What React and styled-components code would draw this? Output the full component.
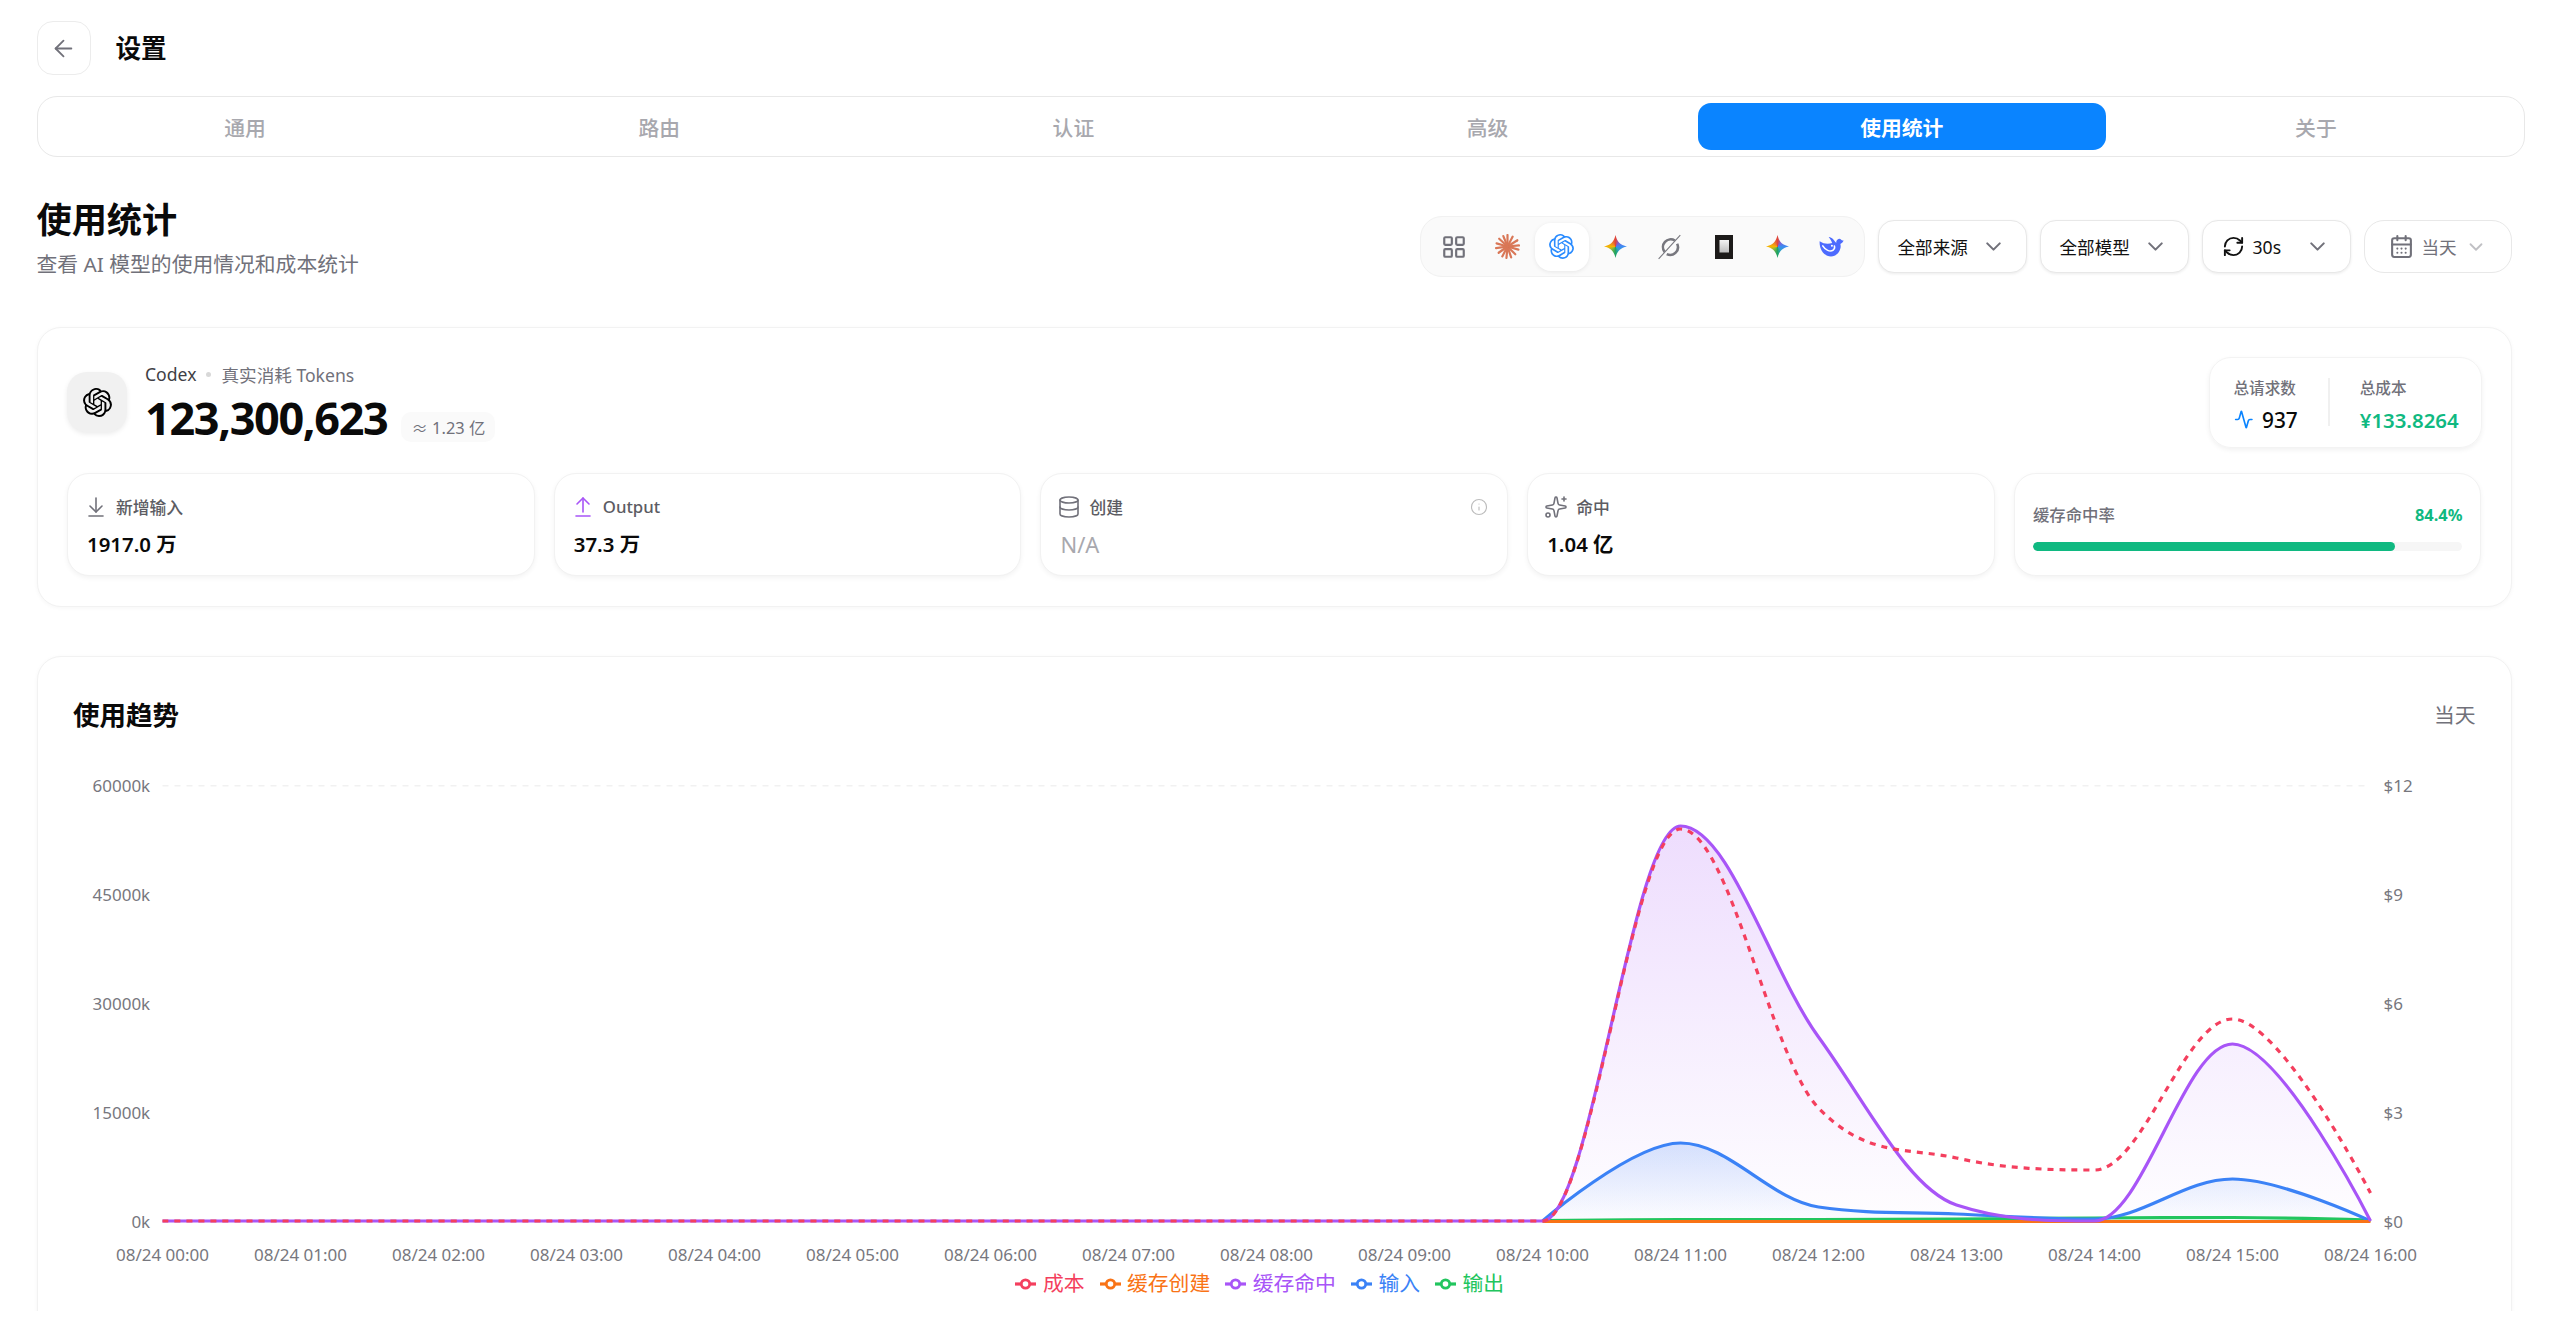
import React from 'react';
import styled, { createGlobalStyle } from 'styled-components';
import {
  ArrowLeft, LayoutGrid, ChevronDown, RefreshCw, CalendarDays, Activity,
  ArrowDownToLine, ArrowUpFromLine, Database, Sparkles, Info,
} from 'lucide-react';
import { SiOpenai } from 'react-icons/si';

const Global = createGlobalStyle`
  html, body { margin: 0; padding: 0; background: #fff; }
  body { font-family: "Noto Sans", "Noto Sans CJK SC", sans-serif; color: #0a0a0a; }
  * { box-sizing: border-box; }
`;

const Page = styled.div`
  width: 2560px;
  height: 1311px;
  overflow: hidden;
  padding: 21px 35px 0 36.5px;
`;
const TopBar = styled.header`
  display: flex;
  align-items: center;
  gap: 25px;
  height: 54px;
  margin-bottom: 21px;
`;
const BackButton = styled.button`
  width: 54px;
  height: 54px;
  display: flex;
  align-items: center;
  justify-content: center;
  padding: 0;
  background: #fff;
  border: 1.5px solid #ececec;
  border-radius: 16px;
  color: #71717a;
`;
const PageTitle = styled.h1`
  margin: 0;
  padding-top: 2px;
  font-size: 25.6px;
  font-weight: 600;
  line-height: 52px;
`;
const Tabs = styled.nav`
  display: grid;
  grid-template-columns: repeat(6, 1fr);
  gap: 6px;
  height: 61px;
  padding: 6px 4px 6px 3.5px;
  border: 1.5px solid #e8e8e8;
  border-radius: 20px;
`;
const Tab = styled.div`
  display: flex;
  align-items: center;
  justify-content: center;
  font-size: 20.8px;
  font-weight: ${p => (p.$active ? 600 : 500)};
  color: ${p => (p.$active ? '#fff' : '#a8a8ae')};
  background: ${p => (p.$active ? '#0a84ff' : 'transparent')};
  border-radius: 13px;
`;
const Content = styled.main`
  padding-right: 13px;
`;
const SectionHead = styled.section`
  display: flex;
  justify-content: space-between;
  align-items: flex-start;
  margin-top: 39.5px;
  height: 82px;
  margin-bottom: 48.5px;
`;
const HeadText = styled.div`
  display: flex;
  flex-direction: column;
  gap: 8px;
`;
const Heading = styled.h2`
  margin: 0;
  font-size: 35.2px;
  line-height: 44px;
  font-weight: 700;
`;
const SubHeading = styled.p`
  margin: 0;
  font-size: 20.8px;
  line-height: 30px;
  color: #71717a;
`;
const Toolbar = styled.div`
  display: flex;
  align-items: center;
  gap: 12.5px;
  padding-top: 19.5px;
`;
const IconGroup = styled.div`
  display: flex;
  height: 61px;
  padding: 5.5px;
  background: #fafafa;
  border: 1.5px solid #f1f1f1;
  border-radius: 22px;
`;
const IconTab = styled.div`
  width: 54px;
  height: 48px;
  display: flex;
  align-items: center;
  justify-content: center;
  color: #71717a;
  border-radius: 16px;
  background: ${p => (p.$active ? '#fff' : 'transparent')};
  box-shadow: ${p => (p.$active ? '0 1px 4px rgba(0,0,0,.08)' : 'none')};
`;
const GeminiStar = styled.span`
  display: block;
  width: 23px;
  height: 23px;
  background: conic-gradient(#e0453a 0deg, #7a62d8 40deg, #3d8bf2 90deg, #2f9fd0 140deg, #1fa463 180deg, #8fb83a 235deg, #f5b400 270deg, #ee7f2a 320deg, #e0453a 360deg);
  clip-path: path('M11.5 0 C13.2 7 16 9.8 23 11.5 C16 13.2 13.2 16 11.5 23 C9.8 16 7 13.2 0 11.5 C7 9.8 9.8 7 11.5 0 Z');
`;
const Select = styled.div`
  width: ${p => (p.$muted ? '148.5px' : '149.5px')};
  height: 53px;
  display: flex;
  align-items: center;
  gap: 8px;
  padding: ${p => (p.$muted ? '0 0 0 24px' : '0 20px 0 19px')};
  background: #fff;
  border: 1.5px solid #e8e8e8;
  border-radius: ${p => (p.$muted ? '20px' : '16px')};
  box-shadow: ${p => (p.$muted ? 'none' : '0 1px 3px rgba(0,0,0,.08)')};
  font-size: 17.6px;
  color: ${p => (p.$muted ? '#71717a' : '#111')};
`;
const SelectText = styled.span`
  flex: ${p => (p.$fill ? 1 : 'none')};
`;
const Card = styled.section`
  background: #fff;
  border: 1.5px solid #f2f2f2;
  border-radius: 24px;
  box-shadow: 0 1px 4px rgba(0,0,0,.04);
`;
const SummaryCard = styled(Card)`
  height: 280px;
  padding: 28.5px 29.5px;
  margin-bottom: 49px;
`;
const SummaryTop = styled.div`
  display: flex;
  justify-content: space-between;
  align-items: center;
  height: 91px;
  margin-bottom: 25px;
`;
const Identity = styled.div`
  display: flex;
  align-items: center;
  gap: 18px;
`;
const LogoBox = styled.div`
  width: 60px;
  height: 60px;
  display: flex;
  align-items: center;
  justify-content: center;
  background: #f1f1f1;
  border-radius: 20px;
  box-shadow: 0 2px 5px rgba(0,0,0,.08);
  color: #000;
`;
const IdentityText = styled.div`
  display: flex;
  flex-direction: column;
  gap: 6px;
`;
const Caption = styled.div`
  display: flex;
  align-items: center;
  gap: 10px;
  height: 26px;
  padding-top: 2px;
  font-size: 17.6px;
  color: #71717a;
`;
const CaptionStrong = styled.span`
  color: #3f3f46;
`;
const CaptionDot = styled.i`
  width: 5px;
  height: 5px;
  border-radius: 50%;
  background: #d8d8d8;
`;
const TotalRow = styled.div`
  display: flex;
  align-items: flex-end;
  gap: 14px;
  height: 52px;
`;
const TotalValue = styled.div`
  font-size: 45px;
  font-weight: 700;
  letter-spacing: -1.35px;
  line-height: 52px;
`;
const ApproxBadge = styled.span`
  height: 30px;
  display: flex;
  align-items: center;
  padding: 0 10px;
  margin-bottom: 2px;
  background: #fafafa;
  border-radius: 10px;
  font-size: 16.4px;
  color: #71717a;
`;
const Totals = styled.div`
  display: flex;
  align-items: flex-start;
  gap: 30px;
  width: 273px;
  height: 91px;
  padding: 20px 24px 0;
  border: 1.5px solid #f3f3f3;
  border-radius: 22px;
  box-shadow: 0 2px 5px rgba(0,0,0,.06);
`;
const TotalCol = styled.div`
  display: flex;
  flex-direction: column;
  gap: 8px;
  min-width: 63px;
`;
const TotalLabel = styled.div`
  font-size: 15.6px;
  line-height: 20px;
  font-weight: 500;
  color: #71717a;
  white-space: nowrap;
`;
const TotalFigure = styled.div`
  display: flex;
  align-items: center;
  gap: 9px;
  font-size: ${p => (p.$green ? '20.4px' : '20.8px')};
  line-height: 28px;
  font-weight: ${p => (p.$green ? 600 : 500)};
  color: ${p => (p.$green ? '#10b981' : '#0a0a0a')};
`;
const TotalDivider = styled.i`
  width: 2px;
  height: 48px;
  background: #f0f0f0;
`;
const Stats = styled.div`
  display: grid;
  grid-template-columns: repeat(5, 1fr);
  gap: 19.2px;
`;
const StatCard = styled.div`
  height: 103px;
  padding: 21px 19px 0;
  background: #fff;
  border: 1.5px solid #f2f2f2;
  border-radius: 22px;
  box-shadow: 0 2px 5px rgba(0,0,0,.05);
`;
const StatHead = styled.div`
  display: flex;
  align-items: center;
  gap: 8px;
  height: 24px;
  margin-left: -3px;
  margin-bottom: 10px;
  font-size: 16.8px;
  font-weight: 500;
  color: #5c5c63;
`;
const StatInfo = styled.span`
  display: flex;
  margin-left: auto;
  color: #bcbcbc;
`;
const StatValue = styled.div`
  font-size: ${p => (p.$empty ? '22px' : '20.4px')};
  line-height: 30px;
  font-weight: ${p => (p.$empty ? 400 : 600)};
  color: ${p => (p.$empty ? '#a8a8ae' : '#0a0a0a')};
`;
const RateCard = styled(StatCard)`
  padding: 28.5px 18px 0;
`;
const RateHead = styled.div`
  display: flex;
  align-items: center;
  justify-content: space-between;
  height: 24px;
  margin-bottom: 15.5px;
`;
const RateLabel = styled.span`
  font-size: 16.4px;
  font-weight: 500;
  color: #71717a;
`;
const RateValue = styled.span`
  font-size: 16.4px;
  font-weight: 700;
  color: #10b981;
`;
const RateTrack = styled.div`
  height: 9.6px;
  background: #f6f6f6;
  border-radius: 5px;
  overflow: hidden;
`;
const RateFill = styled.div`
  height: 100%;
  background: #10b981;
  border-radius: 5px;
`;
const TrendCard = styled(Card)`
  padding: 36.5px 35.5px 60px;
`;
const TrendHead = styled.div`
  display: flex;
  align-items: center;
  justify-content: space-between;
  height: 40px;
  margin-bottom: 31.5px;
`;
const TrendTitle = styled.h3`
  margin: 0;
  font-size: 26.5px;
  font-weight: 700;
`;
const TrendRange = styled.span`
  font-size: 20.8px;
  color: #71717a;
`;
const ChartSvg = styled.svg`
  display: block;
`;
const AxisText = styled.text`
  font-family: "Noto Sans", sans-serif;
  font-size: 17px;
  fill: #77777e;
  dominant-baseline: central;
`;
const Legend = styled.div`
  display: flex;
  justify-content: center;
  gap: 15px;
  height: 27px;
  padding-right: 29px;
`;
const LegendItem = styled.div`
  display: flex;
  align-items: center;
  gap: 6.5px;
  font-size: 20.8px;
  line-height: 27px;
  color: ${p => p.$color};
`;

/* --- chart maths (coordinates relative to the chart's svg) --- */
const OX = 73.5, OY = 765, X0 = 163, STEP = 138, BASE = 1221, TOP = 785.7;
const hx = h => X0 + STEP * h - OX;
const ZERO = Array(10).fill(BASE);
const series = {
  purple: [...ZERO, BASE, 826, 1037, 1205, 1221, 1044, 1221],
  red: [...ZERO, BASE, 829, 1108, 1158, 1170, 1019, 1193],
  blue: [BASE, 1143, 1207, 1214, 1219, 1179, 1221],
  green: [1220.5, 1219.5, 1219.5, 1219, 1218, 1217.5, 1220],
  orange: [1221.5, 1221.5, 1221.5, 1221.5, 1221.5, 1221.5, 1221.5],
};
const clamp = (v, a, b) => Math.max(Math.min(a, b), Math.min(Math.max(a, b), v));
function smoothPath(ys, startHour, s = 0.35) {
  const pts = ys.map((y, i) => [hx(startHour + i), y - OY]);
  const n = pts.length;
  const out = [], inn = [];
  for (let i = 0; i < n; i++) {
    const [x, y] = pts[i];
    if (i === 0 || i === n - 1) { out[i] = [x, y]; inn[i] = [x, y]; continue; }
    const py = pts[i - 1][1], ny = pts[i + 1][1];
    let next = clamp(y + (ny - py) * s * 0.5, y, ny);
    let prev = clamp(y - (next - y), py, y);
    next = y + (y - prev);
    out[i] = [x + STEP * s, next];
    inn[i] = [x - STEP * s, prev];
  }
  let d = `M${pts[0][0]} ${pts[0][1]}`;
  for (let i = 0; i < n - 1; i++) {
    d += ` C${out[i][0]} ${out[i][1]} ${inn[i + 1][0]} ${inn[i + 1][1]} ${pts[i + 1][0]} ${pts[i + 1][1]}`;
  }
  return d;
}
const close = (d, h1, h0) => `${d} L${hx(h1)} ${BASE - OY} L${hx(h0)} ${BASE - OY} Z`;

const hours = Array.from({ length: 17 }, (_, i) => i);
const pad = n => String(n).padStart(2, '0');
const leftTicks = ['60000k', '45000k', '30000k', '15000k', '0k'];
const rightTicks = ['$12', '$9', '$6', '$3', '$0'];
const tickY = i => TOP + ((BASE - TOP) / 4) * i - OY;

const legend = [
  ['成本', '#f43f5e'],
  ['缓存创建', '#f97316'],
  ['缓存命中', '#a855f7'],
  ['输入', '#3b82f6'],
  ['输出', '#22c55e'],
];

const LegendMark = ({ color }) => (
  <svg width="21" height="14" viewBox="0 0 21 14">
    <path d="M0 7H21" stroke={color} strokeWidth="3.2" />
    <circle cx="10.5" cy="7" r="4.2" fill="#fff" stroke={color} strokeWidth="2.8" />
  </svg>
);

const Chart = () => {
  const purple = smoothPath(series.purple, 0);
  const blue = smoothPath(series.blue, 10);
  return (
    <ChartSvg width="2402" height="505" viewBox="0 0 2402 505">
      <defs>
        <linearGradient id="purpleFill" gradientUnits="userSpaceOnUse" x1="0" y1={826 - OY} x2="0" y2={BASE - OY}>
          <stop offset="0" stopColor="#a855f7" stopOpacity=".2" />
          <stop offset="1" stopColor="#a855f7" stopOpacity=".01" />
        </linearGradient>
        <linearGradient id="blueFill" gradientUnits="userSpaceOnUse" x1="0" y1={1143 - OY} x2="0" y2={BASE - OY}>
          <stop offset="0" stopColor="#3b82f6" stopOpacity=".2" />
          <stop offset="1" stopColor="#3b82f6" stopOpacity=".01" />
        </linearGradient>
      </defs>
      <line x1={hx(0)} x2={hx(16)} y1={tickY(0)} y2={tickY(0)} stroke="#f1f1f1" strokeWidth="1.6" strokeDasharray="6 6" />
      {leftTicks.map((t, i) => (
        <AxisText key={t} x={150.7 - OX} y={tickY(i)} textAnchor="end">{t}</AxisText>
      ))}
      {rightTicks.map((t, i) => (
        <AxisText key={t} x={2384 - OX} y={tickY(i)}>{t}</AxisText>
      ))}
      {hours.map(h => (
        <AxisText key={h} x={hx(h)} y={1254.7 - OY} textAnchor="middle">{`08/24 ${pad(h)}:00`}</AxisText>
      ))}
      <path d={close(purple, 16, 0)} fill="url(#purpleFill)" />
      <path d={close(blue, 16, 10)} fill="url(#blueFill)" />
      <path d={smoothPath(series.green, 10)} fill="none" stroke="#22c55e" strokeWidth="3.2" />
      <path d={blue} fill="none" stroke="#3b82f6" strokeWidth="3.2" />
      <path d={smoothPath(series.orange, 10)} fill="none" stroke="#f97316" strokeWidth="3.2" />
      <path d={purple} fill="none" stroke="#a855f7" strokeWidth="3.2" />
      <path d={smoothPath(series.red, 0)} fill="none" stroke="#f43f5e" strokeWidth="3.2" strokeDasharray="6 6" />
    </ChartSvg>
  );
};

const ClaudeIcon = () => (
  <svg width="25" height="25" viewBox="0 0 24 24" stroke="#d97757" strokeWidth="2.1" strokeLinecap="round">
    {[[12, 1], [17, 2.5], [21.5, 6], [23, 11], [22.5, 15], [19.5, 19.5], [15.5, 22.5], [11, 23], [7, 21.5], [3.5, 18], [1, 13.5], [1.5, 9], [4, 4.5], [8, 2]].map(([x, y]) => (
      <path key={`${x}-${y}`} d={`M12 12L${x} ${y}`} />
    ))}
  </svg>
);
const OrbitIcon = () => (
  <svg width="26" height="26" viewBox="0 0 24 24" fill="none" stroke="#77777e">
    <path d="M7 16.5A7.2 7.2 0 0 1 16.5 6" strokeWidth="2.4" />
    <path d="M18.6 9A7.2 7.2 0 0 1 9 18.6" strokeWidth="2.4" />
    <path d="M1.5 23L21.5 1" strokeWidth="1" />
  </svg>
);
const CodeBlockIcon = () => (
  <svg width="18" height="24" viewBox="0 0 18 24">
    <defs>
      <linearGradient id="blockFill" x1="0" y1="0" x2="0" y2="1">
        <stop offset="0" stopColor="#f4f4f4" />
        <stop offset="1" stopColor="#bdbdbd" />
      </linearGradient>
    </defs>
    <rect width="18" height="24" fill="#1c1a19" />
    <rect x="4.5" y="5" width="9.5" height="12.5" fill="url(#blockFill)" />
  </svg>
);
const WhaleIcon = () => (
  <svg width="25" height="25" viewBox="0 0 24 24">
    <path fill="#4d6bfe" d="M.6 7C.2 14 4 21.5 11.5 21.5 16 21.5 19.5 18.5 20.5 14 21 12 20.8 10.5 20.5 9.5 22 9 23.2 7.6 23.6 6 22.7 6.4 21.9 6.2 21.3 5.5 20.5 4.5 19 4.4 17.9 5.2 16.8 6 16.4 7.4 16.6 8.6 15.4 7.6 14.5 6 13.4 4.8 12.2 3.6 10.6 2.6 9.3 2.8 10.8 4.8 12 6.8 12.6 8.6 9 10 4.4 9.6.6 7Z" />
    <path fill="none" stroke="#fff" strokeWidth="1.5" strokeLinecap="round" d="M3.6 11.4c2.4 4 7 6.2 10 4 1.2-.9 1.7-2.3 1.2-3.8" />
    <circle cx="12.4" cy="11.2" r="1" fill="#fff" />
  </svg>
);

const StatBox = ({ icon, label, value, empty, extra }) => (
  <StatCard>
    <StatHead>{icon}<span>{label}</span>{extra}</StatHead>
    <StatValue $empty={empty}>{value}</StatValue>
  </StatCard>
);

export default function App() {
  return (
    <>
      <Global />
      <Page>
        <TopBar>
          <BackButton aria-label="返回"><ArrowLeft size={27} strokeWidth={1.6} /></BackButton>
          <PageTitle>设置</PageTitle>
        </TopBar>
        <Tabs>
          {['通用', '路由', '认证', '高级', '使用统计', '关于'].map(t => (
            <Tab key={t} $active={t === '使用统计'}>{t}</Tab>
          ))}
        </Tabs>
        <Content>
          <SectionHead>
            <HeadText>
              <Heading>使用统计</Heading>
              <SubHeading>查看 AI 模型的使用情况和成本统计</SubHeading>
            </HeadText>
            <Toolbar>
              <IconGroup>
                <IconTab><LayoutGrid size={26} strokeWidth={2} /></IconTab>
                <IconTab><ClaudeIcon /></IconTab>
                <IconTab $active><SiOpenai size={25} color="#2b8cff" /></IconTab>
                <IconTab><GeminiStar /></IconTab>
                <IconTab><OrbitIcon /></IconTab>
                <IconTab><CodeBlockIcon /></IconTab>
                <IconTab><GeminiStar /></IconTab>
                <IconTab><WhaleIcon /></IconTab>
              </IconGroup>
              <Select>
                <SelectText $fill>全部来源</SelectText>
                <ChevronDown size={25} color="#71717a" strokeWidth={2} />
              </Select>
              <Select>
                <SelectText $fill>全部模型</SelectText>
                <ChevronDown size={25} color="#71717a" strokeWidth={2} />
              </Select>
              <Select>
                <RefreshCw size={23} color="#111" strokeWidth={2} />
                <SelectText $fill>30s</SelectText>
                <ChevronDown size={25} color="#71717a" strokeWidth={2} />
              </Select>
              <Select $muted>
                <CalendarDays size={25} strokeWidth={2} />
                <SelectText>当天</SelectText>
                <ChevronDown size={22} color="#c0c0c4" strokeWidth={2} />
              </Select>
            </Toolbar>
          </SectionHead>

          <SummaryCard>
            <SummaryTop>
              <Identity>
                <LogoBox><SiOpenai size={29} /></LogoBox>
                <IdentityText>
                  <Caption>
                    <CaptionStrong>Codex</CaptionStrong>
                    <CaptionDot />
                    <span>真实消耗 Tokens</span>
                  </Caption>
                  <TotalRow>
                    <TotalValue>123,300,623</TotalValue>
                    <ApproxBadge>≈ 1.23 亿</ApproxBadge>
                  </TotalRow>
                </IdentityText>
              </Identity>
              <Totals>
                <TotalCol>
                  <TotalLabel>总请求数</TotalLabel>
                  <TotalFigure><Activity size={21} color="#0a84ff" strokeWidth={2} />937</TotalFigure>
                </TotalCol>
                <TotalDivider />
                <TotalCol>
                  <TotalLabel>总成本</TotalLabel>
                  <TotalFigure $green>¥133.8264</TotalFigure>
                </TotalCol>
              </Totals>
            </SummaryTop>
            <Stats>
              <StatBox icon={<ArrowDownToLine size={24} strokeWidth={1.6} color="#71717a" />} label="新增输入" value="1917.0 万" />
              <StatBox icon={<ArrowUpFromLine size={24} strokeWidth={1.6} color="#a855f7" />} label="Output" value="37.3 万" />
              <StatBox
                icon={<Database size={24} strokeWidth={1.6} color="#71717a" />}
                label="创建"
                value="N/A"
                empty
                extra={<StatInfo><Info size={18} strokeWidth={1.5} /></StatInfo>}
              />
              <StatBox icon={<Sparkles size={24} strokeWidth={1.6} color="#71717a" />} label="命中" value="1.04 亿" />
              <RateCard>
                <RateHead>
                  <RateLabel>缓存命中率</RateLabel>
                  <RateValue>84.4%</RateValue>
                </RateHead>
                <RateTrack>
                  <RateFill style={{ width: '84.4%' }} />
                </RateTrack>
              </RateCard>
            </Stats>
          </SummaryCard>

          <TrendCard>
            <TrendHead>
              <TrendTitle>使用趋势</TrendTitle>
              <TrendRange>当天</TrendRange>
            </TrendHead>
            <Chart />
            <Legend>
              {legend.map(([name, color]) => (
                <LegendItem key={name} $color={color}>
                  <LegendMark color={color} />
                  {name}
                </LegendItem>
              ))}
            </Legend>
          </TrendCard>
        </Content>
      </Page>
    </>
  );
}
